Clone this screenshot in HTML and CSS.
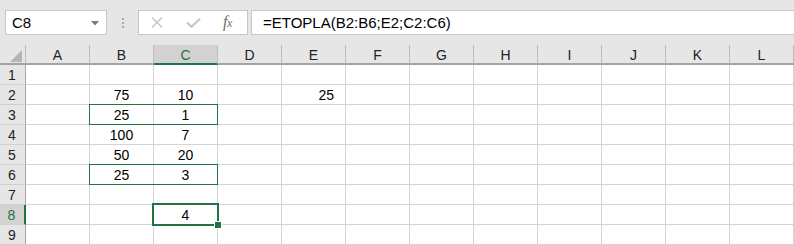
FILE: index.html
```html
<!DOCTYPE html>
<html>
<head>
<meta charset="utf-8">
<link rel="stylesheet" href="styles.css">
</head>
<body>
<div class="app">
  <div class="toolbar">
    <div class="namebox">
      <span class="name">C8</span>
      <svg class="caret" width="8" height="5" viewBox="0 0 8 5"><path d="M0 0H8L4 4.5Z" fill="#7a7a7a"/></svg>
    </div>
    <div class="grip"><i></i><i></i><i></i></div>
    <div class="fxbox">
      <svg class="ico-x" width="12" height="11" viewBox="0 0 12 11"><path d="M1 0.5L11 10.5M11 0.5L1 10.5" stroke="#c6c6c6" stroke-width="1.4" fill="none"/></svg>
      <svg class="ico-check" width="15" height="10" viewBox="0 0 15 10"><path d="M1 4.5L5.5 8.8L14 0.8" stroke="#c6c6c6" stroke-width="2.2" fill="none"/></svg>
      <span class="fx">f<span class="fx-x">x</span></span>
    </div>
    <div class="formula">=ETOPLA(B2:B6;E2;C2:C6)</div>
  </div>

  <div class="sheet">
    <div class="hd corner"></div>
    <div class="hd col">A</div><div class="hd col">B</div><div class="hd col sel-col">C</div><div class="hd col">D</div><div class="hd col">E</div><div class="hd col">F</div><div class="hd col">G</div><div class="hd col">H</div><div class="hd col">I</div><div class="hd col">J</div><div class="hd col">K</div><div class="hd col">L</div>

    <div class="hd row">1</div><div class="c"></div><div class="c"></div><div class="c"></div><div class="c"></div><div class="c"></div><div class="c"></div><div class="c"></div><div class="c"></div><div class="c"></div><div class="c"></div><div class="c"></div><div class="c"></div>
    <div class="hd row">2</div><div class="c"></div><div class="c">75</div><div class="c">10</div><div class="c"></div><div class="c num-r">25</div><div class="c"></div><div class="c"></div><div class="c"></div><div class="c"></div><div class="c"></div><div class="c"></div><div class="c"></div>
    <div class="hd row">3</div><div class="c"></div><div class="c">25</div><div class="c">1</div><div class="c"></div><div class="c"></div><div class="c"></div><div class="c"></div><div class="c"></div><div class="c"></div><div class="c"></div><div class="c"></div><div class="c"></div>
    <div class="hd row">4</div><div class="c"></div><div class="c">100</div><div class="c">7</div><div class="c"></div><div class="c"></div><div class="c"></div><div class="c"></div><div class="c"></div><div class="c"></div><div class="c"></div><div class="c"></div><div class="c"></div>
    <div class="hd row">5</div><div class="c"></div><div class="c">50</div><div class="c">20</div><div class="c"></div><div class="c"></div><div class="c"></div><div class="c"></div><div class="c"></div><div class="c"></div><div class="c"></div><div class="c"></div><div class="c"></div>
    <div class="hd row">6</div><div class="c"></div><div class="c">25</div><div class="c">3</div><div class="c"></div><div class="c"></div><div class="c"></div><div class="c"></div><div class="c"></div><div class="c"></div><div class="c"></div><div class="c"></div><div class="c"></div>
    <div class="hd row">7</div><div class="c"></div><div class="c"></div><div class="c"></div><div class="c"></div><div class="c"></div><div class="c"></div><div class="c"></div><div class="c"></div><div class="c"></div><div class="c"></div><div class="c"></div><div class="c"></div>
    <div class="hd row sel-row">8</div><div class="c"></div><div class="c"></div><div class="c">4</div><div class="c"></div><div class="c"></div><div class="c"></div><div class="c"></div><div class="c"></div><div class="c"></div><div class="c"></div><div class="c"></div><div class="c"></div>
    <div class="hd row">9</div><div class="c"></div><div class="c"></div><div class="c"></div><div class="c"></div><div class="c"></div><div class="c"></div><div class="c"></div><div class="c"></div><div class="c"></div><div class="c"></div><div class="c"></div><div class="c"></div>

    <div class="range range-b3"></div>
    <div class="range range-b6"></div>
    <div class="active"><span class="handle"></span></div>
  </div>
</div>
</body>
</html>
```

FILE: styles.css
```css
html, body {
  margin: 0;
  padding: 0;
  background: #e6e6e6;
}

.app {
  width: 794px;
  height: 245px;
  overflow: hidden;
  font-family: "Liberation Sans", Arial, sans-serif;
  color: #000;
}

.toolbar {
  height: 45px;
  box-sizing: border-box;
  padding: 10px 0 0 5px;
  display: flex;
  align-items: flex-start;
  white-space: nowrap;
}

.namebox {
  width: 102px;
  height: 25px;
  box-sizing: border-box;
  border: 1px solid #c6c6c6;
  background: #fff;
  display: flex;
  align-items: center;
  padding: 0 6px 0 6px;
}

.name {
  font-size: 15px;
  line-height: 23px;
  flex: 1;
}

.caret {
  display: block;
  margin-right: 1px;
  margin-top: 1px;
}

.grip {
  width: 31px;
  height: 25px;
  display: flex;
  flex-direction: column;
  align-items: center;
  justify-content: center;
  gap: 2px;
  padding-right: 0;
}

.grip i {
  display: block;
  width: 2px;
  height: 2px;
  background: #a8a8a8;
}

.fxbox {
  width: 110px;
  height: 25px;
  box-sizing: border-box;
  border: 1px solid #c6c6c6;
  background: #fff;
  display: flex;
  align-items: center;
  padding-left: 12px;
}

.ico-x {
  display: block;
  margin-top: 0px;
}

.ico-check {
  display: block;
  margin-left: 23px;
  margin-top: 1px;
}

.fx {
  margin-left: 22px;
  font-family: "Liberation Serif", "Times New Roman", serif;
  font-style: italic;
  font-size: 16px;
  color: #6e6e6e;
  line-height: 20px;
  letter-spacing: -0.5px;
}

.fx-x {
  font-size: 12px;
}

.formula {
  margin-left: 3px;
  flex: 1;
  height: 25px;
  box-sizing: border-box;
  border: 1px solid #c6c6c6;
  border-right: none;
  background: #fff;
  font-size: 15px;
  line-height: 23px;
  padding-left: 11px;
}

.sheet {
  position: relative;
  display: grid;
  grid-template-columns: 26px repeat(12, 64px);
  grid-template-rows: 20px repeat(9, 20px);
  font-size: 14px;
}

.hd {
  background: #e6e6e6;
  box-sizing: border-box;
  text-align: center;
  color: #222;
}

.col {
  border-right: 1px solid #bcbcbc;
  border-bottom: 2px solid #a3a3a3;
  line-height: 18px;
  padding-top: 1px;
}

.corner {
  position: relative;
  border-right: 1px solid #bcbcbc;
  border-bottom: 2px solid #a3a3a3;
}

.corner::after {
  content: "";
  position: absolute;
  right: 3px;
  bottom: 1px;
  width: 12px;
  height: 12px;
  background: #b5b5b5;
  clip-path: polygon(100% 0, 100% 100%, 0 100%);
}

.sel-col {
  background: #d2d2d2;
  color: #217346;
  border-bottom-color: #217346;
}

.row {
  border-right: 1px solid #a8a8a8;
  border-bottom: 1px solid #cfcfcf;
  line-height: 20px;
  text-align: center;
  padding-right: 1px;
}

.sel-row {
  background: #d2d2d2;
  color: #217346;
  border-right: 2px solid #217346;
}

.c {
  background: #fff;
  box-sizing: border-box;
  border-right: 1px solid #d4d4d4;
  border-bottom: 1px solid #d4d4d4;
  text-align: center;
  line-height: 20px;
}

.num-r {
  text-align: right;
  padding-right: 11px;
}

.range {
  position: absolute;
  box-sizing: border-box;
  border: 1px solid #217346;
  left: 89px;
  width: 129px;
  height: 21px;
}

.range-b3 {
  top: 59px;
}

.range-b6 {
  top: 119px;
}

.active {
  position: absolute;
  box-sizing: border-box;
  left: 152px;
  top: 158px;
  width: 67px;
  height: 23px;
  border: 2px solid #217346;
}

.handle {
  position: absolute;
  right: -4px;
  bottom: -4px;
  width: 6px;
  height: 6px;
  background: #217346;
  box-shadow: 0 0 0 1px #fff;
}
```
